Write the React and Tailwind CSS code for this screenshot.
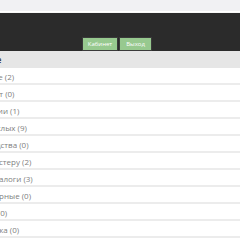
const rows = [
  "Животные (2)",
  "Транспорт (0)",
  "Технологии (1)",
  "Для взрослых (9)",
  "Производства (0)",
  "Вызов мастеру (2)",
  "Наши каталоги (3)",
  "Инкубаторные (0)",
  "Подарки (0)",
  "Сантехника (0)",
];

export default function App() {
  return (
    <div className="w-[240px] h-[240px] overflow-hidden bg-white" style={{ fontFamily: '"Open Sans", sans-serif' }}>
      <div className="h-[12px] bg-[#f1f1f3] border-b border-white" />
      <div className="h-[39px] bg-[#2b2b2b] border-t border-[#f7f7f7] flex items-end justify-center pr-[6px]">
        <div className="flex gap-[1px]">
          <button className="h-[14px] w-[36px] bg-[#97c98f] border border-[#3a3a3a] text-white text-[6px] leading-none">
            Кабинет
          </button>
          <button className="h-[14px] w-[33px] bg-[#97c98f] border border-[#3a3a3a] text-white text-[6px] leading-none">
            Выход
          </button>
        </div>
      </div>
      <div className="ml-[-38px] w-[278px]">
        <div className="h-[17px] bg-[#e6e6e6] flex items-center text-[8px] font-semibold text-[#333]">
          Название
        </div>
        {rows.map((r) => (
          <div key={r} className="h-[17px] pt-[3px] border-b-2 border-[#ececec] flex items-center text-[8px] text-[#808080]">
            {r}
          </div>
        ))}
      </div>
    </div>
  );
}
